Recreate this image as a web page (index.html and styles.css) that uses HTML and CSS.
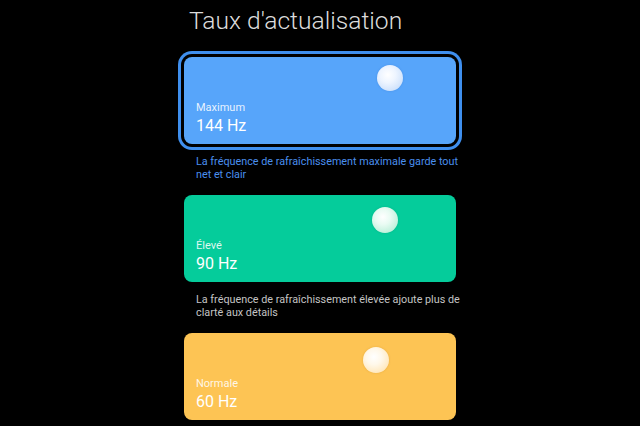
FILE: index.html
```html
<!DOCTYPE html>
<html lang="fr">
<head>
<meta charset="utf-8">
<title>Taux d'actualisation</title>
<link rel="stylesheet" href="styles.css">
</head>
<body>
<main class="screen">
  <h1 class="title">Taux d'actualisation</h1>

  <section class="option option-selected">
    <div class="card card-blue">
      <span class="ball ball-blue" style="left:193px; top:8px"></span>
      <span class="card-label">Maximum</span>
      <span class="card-value">144 Hz</span>
    </div>
    <p class="desc desc-active">La fréquence de rafraîchissement maximale garde tout net et clair</p>
  </section>

  <section class="option">
    <div class="card card-green">
      <span class="ball ball-green" style="left:188px; top:12px"></span>
      <span class="card-label">Élevé</span>
      <span class="card-value">90 Hz</span>
    </div>
    <p class="desc">La fréquence de rafraîchissement élevée ajoute plus de clarté aux détails</p>
  </section>

  <section class="option">
    <div class="card card-yellow">
      <span class="ball ball-yellow" style="left:179px; top:14px"></span>
      <span class="card-label">Normale</span>
      <span class="card-value">60 Hz</span>
    </div>
  </section>
</main>
</body>
</html>
```

FILE: styles.css
```css
html, body {
  margin: 0;
  padding: 0;
  background: #000;
}

body {
  width: 640px;
  height: 426px;
  overflow: hidden;
  font-family: Roboto, "Noto Sans", sans-serif;
}

.screen {
  display: flex;
  flex-direction: column;
  width: 272px;
  margin-left: 184px;
  padding-top: 5px;
}

.title {
  margin: 0 0 20px 5px;
  font-size: 24.6px;
  line-height: 32px;
  font-weight: 300;
  color: #dcdcdc;
  white-space: nowrap;
}

.option {
  display: flex;
  flex-direction: column;
}

.card {
  position: relative;
  height: 87px;
  box-sizing: border-box;
  padding: 44px 12px 0;
  border-radius: 8px;
  display: flex;
  flex-direction: column;
}

.option-selected .card {
  box-shadow: 0 0 0 3px #000, 0 0 0 6px #3f8fee;
}

.card-blue { background: #57a5fa; }
.card-green { background: #05cc9b; }
.card-yellow { background: #fdc454; }

.card-label {
  font-size: 11px;
  line-height: 14px;
  color: rgba(255, 255, 255, 0.88);
}

.card-value {
  margin-top: 1px;
  font-size: 16px;
  line-height: 20px;
  color: #fff;
}

.ball {
  position: absolute;
  width: 26px;
  height: 26px;
  border-radius: 50%;
}

.ball-blue {
  background: radial-gradient(circle at 42% 38%, #ffffff 0%, #eef5ff 35%, #cfe2fb 75%, #a9cdf8 100%);
  box-shadow: 0 0 2px rgba(40, 100, 190, 0.35);
}

.ball-green {
  background: radial-gradient(circle at 42% 38%, #ffffff 0%, #e9fbf3 35%, #bff0db 75%, #8fe3c3 100%);
  box-shadow: 0 0 2px rgba(0, 120, 90, 0.3);
}

.ball-yellow {
  background: radial-gradient(circle at 42% 38%, #ffffff 0%, #fff8ea 35%, #ffe8bd 75%, #fbd48c 100%);
  box-shadow: 0 0 2px rgba(170, 110, 20, 0.3);
}

.desc {
  margin: 11px -8px 14px 0;
  padding: 0 0 0 12px;
  font-size: 10.8px;
  line-height: 13px;
  color: #c4c4c4;
}

.desc-active {
  color: #4a8fee;
}
```
